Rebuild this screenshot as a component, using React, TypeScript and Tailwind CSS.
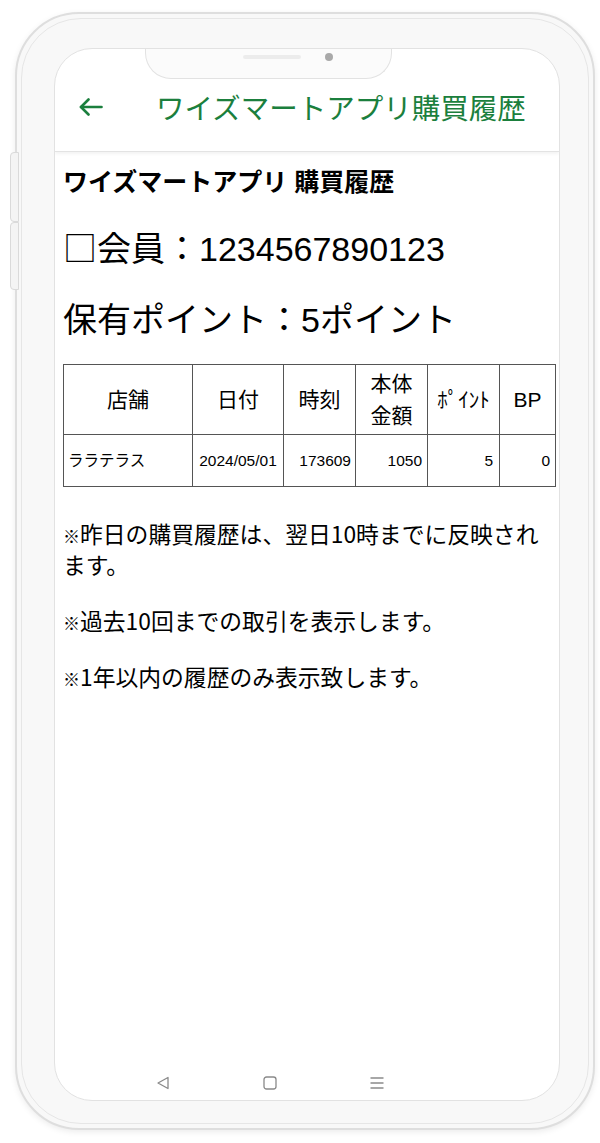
const rows = [
  { store: "ララテラス", date: "2024/05/01", time: "173609", amount: "1050", point: "5", bp: "0" },
];

const notes = [
  ["昨日の購買履歴は、翌日10時までに反映され", "ます。"],
  ["過去10回までの取引を表示します。"],
  ["1年以内の履歴のみ表示致します。"],
];

function NavBar() {
  return (
    <div className="mt-auto flex h-[34px] items-center pl-[100px] gap-[91px]">
      <svg width="16" height="16" viewBox="0 0 16 16" fill="none" stroke="#8a8a8a" strokeWidth="1.3" strokeLinejoin="round">
        <path d="M13 2.5 L3 8 L13 13.5 Z" />
      </svg>
      <svg width="16" height="16" viewBox="0 0 16 16" fill="none" stroke="#8a8a8a" strokeWidth="1.3">
        <rect x="2" y="2" width="12" height="12" rx="2.5" />
      </svg>
      <svg width="16" height="16" viewBox="0 0 16 16" fill="none" stroke="#8a8a8a" strokeWidth="1.3">
        <path d="M1.5 3 H14.5 M1.5 8 H14.5 M1.5 13 H14.5" />
      </svg>
    </div>
  );
}

export default function App() {
  return (
    <div className="relative h-[1143px] w-[600px] overflow-hidden bg-white">
      {/* side buttons */}
      <div className="absolute left-[10px] top-[152px] h-[70px] w-[9px] rounded-l-[4px] border border-[#dadada] bg-[#f4f4f4]" />
      <div className="absolute left-[10px] top-[222px] h-[68px] w-[9px] rounded-l-[4px] border border-[#dadada] bg-[#f4f4f4]" />

      {/* phone body */}
      <div className="ml-[15px] mt-[12px] h-[1118px] w-[580px] rounded-[64px] border-2 border-[#dedede] bg-[#f8f8f8] p-[4px] shadow-[0_2px_6px_rgba(0,0,0,0.08)]">
        <div className="h-full w-full rounded-[60px] border border-[#e6e6e6] pl-[32px] pt-[29px]">
          {/* screen */}
          <div className="relative flex h-[1053px] w-[506px] flex-col overflow-hidden rounded-[38px] border border-[#e2e2e2] bg-white">
            {/* notch */}
            <div className="absolute left-[90px] top-[-1px] h-[31px] w-[247px] rounded-b-[26px] border border-t-0 border-[#e2e2e2] bg-[#fbfbfb]">
              <div className="absolute left-[97px] top-[7px] h-[4px] w-[58px] rounded-full bg-[#ececec]" />
              <div className="absolute left-[179px] top-[5px] h-[8px] w-[8px] rounded-full bg-[#a9a9a9]" />
            </div>

            {/* app bar */}
            <div className="flex h-[103px] shrink-0 items-center border-b border-[#e3e3e3] pt-[14px] shadow-[0_2px_3px_rgba(0,0,0,0.05)]">
              <svg className="ml-[24px]" width="24" height="18" viewBox="0 0 24 18" fill="none" stroke="#1b7f3d" strokeWidth="2.6" strokeLinecap="round" strokeLinejoin="round">
                <path d="M22.5 9 H2" />
                <path d="M9.5 1.5 L2 9 L9.5 16.5" />
              </svg>
              <div className="ml-[53px] text-[28.5px] leading-none text-[#1b7f3d] [font-family:'Noto_Sans_CJK_JP',sans-serif]">
                ワイズマートアプリ購買履歴
              </div>
            </div>

            {/* content */}
            <div className="pl-[8px] pr-[4px] text-black [font-family:'Liberation_Sans','Noto_Sans_CJK_JP',sans-serif]">
              <div className="mt-[14px] text-[25px] font-bold leading-[32px]">ワイズマートアプリ 購買履歴</div>
              <div className="mt-[27px] text-[34px] leading-[44px]">
                <span className="[font-family:'Noto_Sans_CJK_JP',sans-serif]">□</span>会員：1234567890123
              </div>
              <div className="mt-[26px] text-[34px] leading-[46px]">保有ポイント：5ポイント</div>

              <table className="mt-[21px] w-[492px] table-fixed border-collapse border border-[#555]">
                <colgroup>
                  <col className="w-[129px]" />
                  <col className="w-[91px]" />
                  <col className="w-[72px]" />
                  <col className="w-[72px]" />
                  <col className="w-[72px]" />
                  <col className="w-[56px]" />
                </colgroup>
                <thead>
                  <tr className="h-[70px] text-[21px] leading-[32px]">
                    <th className="border border-[#555] px-[4px] font-normal">店舗</th>
                    <th className="border border-[#555] px-[4px] font-normal">日付</th>
                    <th className="border border-[#555] px-[4px] font-normal">時刻</th>
                    <th className="border border-[#555] px-[12px] font-normal">本体金額</th>
                    <th className="border border-[#555] px-[2px] font-normal">ﾎﾟｲﾝﾄ</th>
                    <th className="border border-[#555] px-[2px] font-normal">BP</th>
                  </tr>
                </thead>
                <tbody>
                  {rows.map((r) => (
                    <tr key={r.date + r.time} className="h-[52px] text-[15.5px]">
                      <td className="border border-[#555] px-[4px] text-left">{r.store}</td>
                      <td className="border border-[#555] px-[4px] text-center">{r.date}</td>
                      <td className="border border-[#555] px-[4px] text-right">{r.time}</td>
                      <td className="border border-[#555] px-[5px] text-right">{r.amount}</td>
                      <td className="border border-[#555] px-[6px] text-right">{r.point}</td>
                      <td className="border border-[#555] px-[5px] text-right">{r.bp}</td>
                    </tr>
                  ))}
                </tbody>
              </table>

              <div className="mt-[31px] flex flex-col gap-[25px] text-[22.8px] leading-[31px] [font-family:'Noto_Sans_CJK_JP',sans-serif]">
                {notes.map((lines) => (
                  <p key={lines[0]}>
                    <span className="text-[17px] leading-none">※</span>
                    {lines[0]}
                    {lines[1] && (
                      <>
                        <br />
                        {lines[1]}
                      </>
                    )}
                  </p>
                ))}
              </div>
            </div>

            <NavBar />
          </div>
        </div>
      </div>
    </div>
  );
}
